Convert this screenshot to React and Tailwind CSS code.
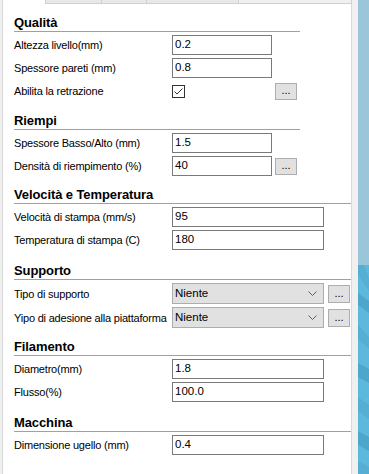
import React from "react";

const FONT = { fontFamily: '"Liberation Sans", Arial, sans-serif' };

function Heading({ title, mt, lineW }) {
  return (
    <div className={`${mt} ${lineW} h-[17px] border-b border-[#a0a0a0] text-[13px] leading-[16px] font-bold text-black tracking-[-0.1px]`}>
      {title}
    </div>
  );
}

function Label({ children }) {
  return (
    <div className="w-[158px] shrink-0 text-[11px] tracking-[-0.2px] text-black whitespace-nowrap leading-[14px]">
      {children}
    </div>
  );
}

function TextInput({ value, w }) {
  return (
    <div className={`${w} h-[20px] border border-[#7a7a7a] bg-white pl-[2px] flex items-center text-[11.5px] text-black`}>
      {value}
    </div>
  );
}

function Dots({ h, ml }) {
  return (
    <div className={`${ml} w-[22px] ${h} bg-[#e1e1e1] border border-[#adadad] flex items-center justify-center text-[11px] leading-none text-black pb-[1px]`}>
      ...
    </div>
  );
}

function Select({ value }) {
  return (
    <div className="w-[152px] h-[21px] bg-[#e1e1e1] border border-[#adadad] flex items-center justify-between pl-[2px] pr-[6px] text-[11.5px] text-black">
      <span>{value}</span>
      <svg width="9" height="5" viewBox="0 0 9 5">
        <polyline points="0.5,0.5 4.5,4.5 8.5,0.5" fill="none" stroke="#606060" strokeWidth="1" />
      </svg>
    </div>
  );
}

function Row({ children, h = "h-[20px]", mt = "mt-[3px]" }) {
  return <div className={`flex items-center ${h} ${mt}`}>{children}</div>;
}

export default function App() {
  return (
    <div className="w-[369px] h-[474px] bg-[#f0f0f0] flex overflow-hidden" style={FONT}>
      <div className="w-[352px] flex flex-col pl-[2px] shrink-0">
        {/* tab strip */}
        <div className="h-[4px] flex shrink-0">
          <div className="w-[43px] bg-white border-l border-[#d9d9d9]" />
          <div className="w-[56px] bg-[#e8e8e8] border-l border-b border-[#d0d0d0]" />
          <div className="w-[45px] bg-[#e8e8e8] border-l border-b border-[#d0d0d0]" />
          <div className="w-[92px] bg-[#e8e8e8] border-l border-b border-[#d0d0d0]" />
          <div className="flex-1 bg-[#f0f0f0] border-l border-b border-r border-[#d0d0d0]" />
        </div>
        {/* panel */}
        <div className="flex-1 bg-white border-l border-r border-[#d9d9d9] pl-[11px] flex flex-col">
          <Heading title="Qualità" mt="mt-[11px]" lineW="w-[286px]" />
          <Row>
            <Label>Altezza livello(mm)</Label>
            <TextInput value="0.2" w="w-[100px]" />
          </Row>
          <Row>
            <Label>Spessore pareti (mm)</Label>
            <TextInput value="0.8" w="w-[100px]" />
          </Row>
          <Row>
            <Label>Abilita la retrazione</Label>
            <div className="w-[100px] flex items-center">
              <div className="w-[13px] h-[13px] border border-[#333333] bg-white flex items-center justify-center">
                <svg width="11" height="11" viewBox="0 0 11 11">
                  <polyline points="1.5,5.5 4,8 9.5,2.5" fill="none" stroke="#333333" strokeWidth="1" />
                </svg>
              </div>
            </div>
            <Dots h="h-[17px]" ml="ml-[3px]" />
          </Row>

          <Heading title="Riempi" mt="mt-[12px]" lineW="w-[286px]" />
          <Row>
            <Label>Spessore Basso/Alto (mm)</Label>
            <TextInput value="1.5" w="w-[100px]" />
          </Row>
          <Row>
            <Label>Densità di riempimento (%)</Label>
            <TextInput value="40" w="w-[100px]" />
            <Dots h="h-[17px]" ml="ml-[3px]" />
          </Row>

          <Heading title="Velocità e Temperatura" mt="mt-[11px]" lineW="w-[337px]" />
          <Row>
            <Label>Velocità di stampa (mm/s)</Label>
            <TextInput value="95" w="w-[152px]" />
          </Row>
          <Row>
            <Label>Temperatura di stampa (C)</Label>
            <TextInput value="180" w="w-[152px]" />
          </Row>

          <Heading title="Supporto" mt="mt-[13px]" lineW="w-[337px]" />
          <Row h="h-[21px]">
            <Label>Tipo di supporto</Label>
            <Select value="Niente" />
            <Dots h="h-[18px]" ml="ml-[4px]" />
          </Row>
          <Row h="h-[21px]">
            <Label>Yipo di adesione alla piattaforma</Label>
            <Select value="Niente" />
            <Dots h="h-[18px]" ml="ml-[4px]" />
          </Row>

          <Heading title="Filamento" mt="mt-[11px]" lineW="w-[337px]" />
          <Row>
            <Label>Diametro(mm)</Label>
            <TextInput value="1.8" w="w-[152px]" />
          </Row>
          <Row>
            <Label>Flusso(%)</Label>
            <TextInput value="100.0" w="w-[152px]" />
          </Row>

          <Heading title="Macchina" mt="mt-[13px]" lineW="w-[337px]" />
          <Row>
            <Label>Dimensione ugello (mm)</Label>
            <TextInput value="0.4" w="w-[152px]" />
          </Row>
        </div>
      </div>
      <div className="w-[6px] shrink-0" />
      <div className="w-[11px] shrink-0 flex flex-col">
        <div className="h-[265px] bg-[#9bc5d8]" />
        <div className="flex-1 bg-[#5db8dd]">
          <svg width="11" height="209" viewBox="0 0 11 209">
            <polygon points="0,0 6,0 11,14 11,26 0,10" fill="#56aed3" />
            <polygon points="0,28 11,36 11,48 0,40" fill="#4fa6cb" />
            <polygon points="0,60 11,72 11,84 0,74" fill="#56aed3" />
            <polygon points="0,98 11,104 11,118 0,112" fill="#4fa6cb" />
            <polygon points="0,132 11,140 11,154 0,146" fill="#56aed3" />
            <polygon points="0,166 11,172 11,186 0,180" fill="#4fa6cb" />
            <polygon points="0,196 11,202 11,209 0,209" fill="#56aed3" />
          </svg>
        </div>
      </div>
    </div>
  );
}
